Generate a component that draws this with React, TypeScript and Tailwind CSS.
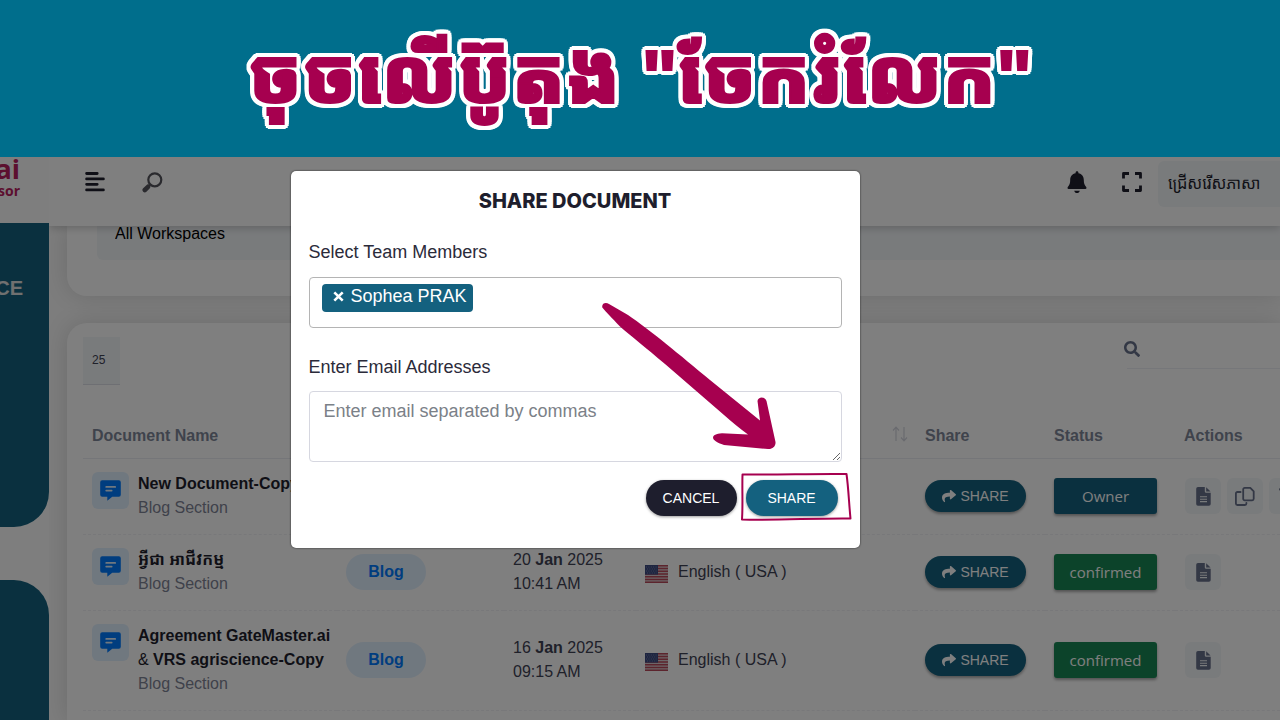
import React from "react";
import { FaSearch, FaShare, FaTrashAlt } from "react-icons/fa";

type Row = {
  title: React.ReactNode;
  kind?: string;
  date?: [string, string, string];
  time?: string;
  language?: string;
  status: string;
  owner?: boolean;
  height: string;
};

const rows: Row[] = [
  { title: "New Document-Copy", status: "Owner", owner: true, height: "h-[76px]" },
  {
    title: "អ្វីជា អាជីវកម្ម",
    kind: "Blog",
    date: ["20", "Jan", "2025"],
    time: "10:41 AM",
    language: "English ( USA )",
    status: "confirmed",
    height: "h-[76px]",
  },
  {
    title: (
      <>
        Agreement GateMaster.ai
        <br />
        <span className="font-normal">&amp;</span> VRS agriscience-Copy
      </>
    ),
    kind: "Blog",
    date: ["16", "Jan", "2025"],
    time: "09:15 AM",
    language: "English ( USA )",
    status: "confirmed",
    height: "h-[100px]",
  },
];

function MenuIcon() {
  return (
    <svg width="20" height="20" viewBox="0 0 20 20" fill="none" stroke="#1e1e2d" strokeWidth="2.8" strokeLinecap="round">
      <path d="M1.6 1.5h10.6M1.6 6.900h16.800M1.6 12.300h10.6M1.6 17.900h16.800" />
    </svg>
  );
}

function LoupeIcon() {
  return (
    <svg width="21" height="21" viewBox="0 0 21 21" fill="none" stroke="#55555c">
      <circle cx="12.8" cy="7.8" r="6.5" strokeWidth="2.2" />
      <path d="M8 12.8 6.4 14.4" strokeWidth="2.4" />
      <path d="M6 14.8 2.8 18" strokeWidth="4.6" strokeLinecap="round" />
    </svg>
  );
}

function BellIcon() {
  return (
    <svg width="20" height="23" viewBox="0 0 20 23" fill="#1e1e2d">
      <path d="M10 .3c.9 0 1.400.6 1.400 1.400v.5c3.400.7 5.400 3.300 5.400 6.700 0 3.400.7 4.900 2.400 7.100.6.8.4 2-.8 2H1.600c-1.200 0-1.400-1.200-.8-2C2.500 13.800 3.200 12.300 3.200 8.900c0-3.400 2-6 5.400-6.700v-.5C8.600.9 9.100.3 10 .3z" />
      <path d="M7.200 19.800h5.600c-.4 1.500-1.400 2.300-2.800 2.300s-2.400-.8-2.800-2.300z" />
    </svg>
  );
}

function FullscreenIcon() {
  return (
    <svg width="20" height="20" viewBox="0 0 20 20" fill="none" stroke="#1e1e2d" strokeWidth="2.8" strokeLinejoin="round">
      <path d="M1.5 6.6V1.5H7M13 1.5h5.500v5.100M18.500 13.400v5.100H13M7 18.500H1.500v-5.100" />
    </svg>
  );
}

function ChatIcon() {
  return (
    <svg width="21" height="21" viewBox="0 0 21 21">
      <path
        d="M2.2.3h16.6a2 2 0 0 1 2 2v12.400a2 2 0 0 1-2 2h-6.600L7.300 20.700v-4H2.200a2 2 0 0 1-2-2V2.300a2 2 0 0 1 2-2z"
        fill="#007bff"
      />
      <path d="M6.200 6.900h9M6.200 10.600h5.500" stroke="#e1f0ff" strokeWidth="1.700" strokeLinecap="round" />
    </svg>
  );
}

function FileIcon() {
  return (
    <svg width="15" height="19" viewBox="0 0 15 19" className="mt-px">
      <path
        d="M2 0h6.800v4.400a1.400 1.400 0 0 0 1.400 1.400h4.500V17a1.800 1.800 0 0 1-1.800 1.800H2A1.800 1.800 0 0 1 .2 17V1.800A1.800 1.800 0 0 1 2 0z"
        fill="#66708a"
      />
      <path d="M10.200.200 14.500 4.500h-4.300z" fill="#66708a" />
      <path d="M4 9.800h7M4 12.200h7M4 14.600h7" stroke="#f3f6f9" strokeWidth="1.100" />
    </svg>
  );
}

function CopyIcon() {
  return (
    <svg width="20" height="19" viewBox="0 0 20 19" fill="none" stroke="#66708a" strokeWidth="1.800" strokeLinejoin="round">
      <path d="M9.700.900h5.600l3.400 3.400v7.500a1.500 1.500 0 0 1-1.500 1.500H9.700a1.500 1.500 0 0 1-1.500-1.500V2.400A1.500 1.500 0 0 1 9.700.900z" />
      <path d="M5.600 5H2.400A1.500 1.500 0 0 0 .900 6.500v10A1.500 1.500 0 0 0 2.400 18h7.500a1.500 1.500 0 0 0 1.500-1.500v-.700" strokeLinecap="round" />
    </svg>
  );
}

function FlagIcon() {
  return (
    <svg width="23" height="18" viewBox="0 0 23 18" className="mt-1" aria-hidden="true">
      <rect width="23" height="18" fill="#d8ccd0" />
      <path
        d="M0 .7h23M0 3.450h23M0 6.200h23M0 8.950h23M0 11.700h23M0 14.450h23M0 17.200h23"
        stroke="#b8485a"
        strokeWidth="1.400"
      />
      <rect width="13" height="9.600" fill="#3c4a80" />
      <path
        d="M1 2h11M2 4h10M1 6h11M2 8h10"
        stroke="#8890b8"
        strokeWidth=".8"
        strokeDasharray="1 1.400"
      />
    </svg>
  );
}

function SortIcon() {
  return (
    <svg width="16" height="16" viewBox="0 0 16 16" fill="none" stroke="#d3d5de" strokeWidth="1.200">
      <path d="M4 15V1.500M1 4.500l3-3.300 3 3.300M12 1v13.500M9 11.500l3 3.300 3-3.300" />
    </svg>
  );
}

function IconButton({ label, children }: { label: string; children: React.ReactNode }) {
  return (
    <button
      type="button"
      aria-label={label}
      className="flex size-9 shrink-0 items-center justify-center rounded-md bg-[#f3f6f9] text-lg text-[#66708a]"
    >
      {children}
    </button>
  );
}

function DocumentRow({ row }: { row: Row }) {
  return (
    <tr className={`${row.height} border-b border-dashed border-[#f0f1f5]`}>
      <td className="pl-[9px]">
        <div className="flex items-start gap-[9px]">
          <span className="flex size-[37px] shrink-0 items-center justify-center rounded-md bg-[#e1f0ff]">
            <ChatIcon />
          </span>
          <div className="leading-6 whitespace-nowrap">
            <div className="font-bold text-[#1e1e2d]">{row.title}</div>
            <div className="text-[#7e8496]">Blog Section</div>
          </div>
        </div>
      </td>
      <td className="pl-[9px]">
        {row.kind && (
          <span className="inline-flex h-9 w-20 items-center justify-center rounded-full bg-[#e1f0ff] font-bold text-[#007bff]">
            {row.kind}
          </span>
        )}
      </td>
      <td className="pl-[9px] leading-6">
        {row.date && (
          <>
            <div>
              {row.date[0]} <b>{row.date[1]}</b> {row.date[2]}
            </div>
            <div>{row.time}</div>
          </>
        )}
      </td>
      <td className="pl-[9px]">
        {row.language && (
          <div className="flex items-center gap-[10px]">
            <FlagIcon />
            <span>{row.language}</span>
          </div>
        )}
      </td>
      <td className="pl-[10px]">
        <button
          type="button"
          className="flex h-8 w-[101px] items-center justify-center gap-1 rounded-full bg-[#14617f] text-sm text-white shadow-[0_2px_3px_rgba(0,0,0,0.35)]"
        >
          <FaShare className="size-[14px]" />
          SHARE
        </button>
      </td>
      <td className="pl-[9px]">
        <button
          type="button"
          className={`flex h-9 w-[103px] items-center justify-center rounded-[3px] font-['Open_Sans','Noto_Sans',sans-serif] text-[15px] text-white shadow-[0_2px_3px_rgba(0,0,0,0.35)] ${
            row.owner ? "bg-[#14617f]" : "bg-[#198754]"
          }`}
        >
          {row.status}
        </button>
      </td>
      <td className="pl-[10px]">
        <div className="flex gap-[6px]">
          <IconButton label="Open">
            <FileIcon />
          </IconButton>
          {row.owner && (
            <>
              <IconButton label="Duplicate">
                <CopyIcon />
              </IconButton>
              <IconButton label="Delete">
                <FaTrashAlt />
              </IconButton>
            </>
          )}
        </div>
      </td>
    </tr>
  );
}

function Workspace() {
  return (
    <div className="flex h-full bg-[#fafafa] text-base text-[#3f4254]">
      <aside className="z-10 flex w-[49px] shrink-0 flex-col bg-[#fdfdfd]">
        <div className="flex h-[66px] flex-col items-end overflow-hidden pr-[29px] font-['Open_Sans',sans-serif] font-bold text-[#b8205f]">
          <span className="-mt-1 text-[27px] leading-8">ai</span>
          <span className="text-sm leading-3">sor</span>
        </div>
        <div className="flex h-[304px] shrink-0 justify-end overflow-hidden rounded-br-[35px] bg-[#14617f] pt-[53px] pr-[26px] text-xl leading-6 font-bold text-[#e0e0e0]">
          CE
        </div>
        <div className="mt-[53px] flex-1 rounded-tr-[35px] bg-[#14617f]" />
      </aside>

      <div className="flex min-w-0 flex-1 flex-col">
        <header className="z-[5] flex h-[69px] shrink-0 items-center bg-white pt-1 pb-[19px] pl-9 shadow-[0_2px_8px_rgba(0,0,0,0.2)]">
          <button type="button" aria-label="Menu" className="pb-1">
            <MenuIcon />
          </button>
          <button type="button" aria-label="Search" className="ml-[37px] pb-1">
            <LoupeIcon />
          </button>
          <button type="button" aria-label="Notifications" className="ml-auto pb-1">
            <BellIcon />
          </button>
          <button type="button" aria-label="Full screen" className="ml-[35px] pb-1">
            <FullscreenIcon />
          </button>
          <select
            aria-label="Language"
            className="ml-4 h-[46px] w-[122px] appearance-none rounded-l-md bg-[#f3f6f9] pl-[10px] text-base text-[#1e1e2d]"
          >
            <option>ជ្រើសរើសភាសា</option>
          </select>
        </header>

        <main className="flex min-h-0 flex-1 flex-col gap-[27px] pl-[18px]">
          <section className="h-[70px] shrink-0 rounded-bl-[20px] bg-white pl-[30px] shadow-[0_0_24px_rgba(0,0,0,0.14)]">
            <div className="flex h-[34px] items-end overflow-hidden rounded-bl-md">
              <select
                aria-label="Workspace"
                className="h-[52px] w-full shrink-0 appearance-none bg-[#f3f6f9] pl-[18px] text-base text-black"
              >
                <option>All Workspaces</option>
              </select>
            </div>
          </section>

          <section className="flex-1 rounded-tl-[20px] bg-white pt-[14px] pl-4 shadow-[0_0_24px_rgba(0,0,0,0.14)]">
            <div className="mb-[30px] flex h-12 items-start justify-between">
              <select
                aria-label="Rows per page"
                className="h-12 w-[37px] appearance-none border-b border-[#dcdfe6] bg-[#f3f6f9] pb-[2px] pl-[9px] text-xs"
              >
                <option>25</option>
              </select>
              <label className="flex h-8 w-[156px] items-center text-base text-[#66708a]">
                <FaSearch className="mb-2 shrink-0" />
                <input
                  type="search"
                  aria-label="Search documents"
                  className="-ml-[13px] h-8 w-full border-b border-[#eceef4] bg-transparent pl-6"
                />
              </label>
            </div>

            <table className="w-full table-fixed border-collapse text-left">
              <colgroup>
                <col className="w-[254px]" />
                <col className="w-[167px]" />
                <col className="w-[132px]" />
                <col className="w-[279px]" />
                <col className="w-[130px]" />
                <col className="w-[130px]" />
                <col />
              </colgroup>
              <thead>
                <tr className="h-[43px] border-b border-[#ebedf3] text-[#7e8799]">
                  <th className="pl-[9px] font-bold">Document Name</th>
                  <th />
                  <th />
                  <th>
                    <span className="flex justify-end pr-[7px] pb-1">
                      <SortIcon />
                    </span>
                  </th>
                  <th className="pl-[10px] font-bold">Share</th>
                  <th className="pl-[9px] font-bold">Status</th>
                  <th className="pl-[9px] font-bold">Actions</th>
                </tr>
              </thead>
              <tbody>
                {rows.map((row, index) => (
                  <DocumentRow key={index} row={row} />
                ))}
              </tbody>
            </table>
          </section>
        </main>
      </div>
    </div>
  );
}

function ShareDialog() {
  return (
    <div
      role="dialog"
      aria-labelledby="share-title"
      className="relative w-[569px] rounded-[5px] bg-white px-[18px] pt-[18px] pb-8 text-lg text-[#2b2b3a] shadow-[0_0_2px_rgba(0,0,0,0.8)]"
    >
      <h2
        id="share-title"
        className="text-center font-['Inter','Liberation_Sans',sans-serif] text-xl leading-6 font-extrabold text-[#1e1e2d]"
      >
        SHARE DOCUMENT
      </h2>

      <label htmlFor="members" className="mt-[27px] block leading-6">
        Select Team Members
      </label>
      <div className="mt-[13px] flex h-[51px] items-start rounded border border-[#b4b4b4] pt-[6px] pl-3">
        <span className="flex h-7 shrink-0 items-center gap-[7px] rounded bg-[#14617f] pr-[6px] pb-1 pl-[11px] text-white">
          <button type="button" aria-label="Remove Sophea PRAK">
            <svg width="11" height="11" viewBox="0 0 11 11" stroke="white" strokeWidth="2.600">
              <path d="M1.300 1.300 9.700 9.700M9.700 1.300 1.300 9.700" />
            </svg>
          </button>
          Sophea PRAK
        </span>
        <input id="members" className="min-w-0 flex-1 bg-transparent outline-none" />
      </div>

      <label htmlFor="emails" className="mt-[27px] block leading-6">
        Enter Email Addresses
      </label>
      <textarea
        id="emails"
        placeholder="Enter email separated by commas"
        className="mt-3 block h-[71px] w-full rounded border border-[#d6d7e0] px-[14px] py-[7px] leading-6 placeholder:text-[#7b8188]"
      />

      <div className="mt-[18px] flex justify-end gap-[9px] pr-1 text-sm text-white">
        <button type="button" className="h-9 w-[91px] rounded-full bg-[#1e1e2d] shadow-[0_1px_3px_rgba(0,0,0,0.4)]">
          CANCEL
        </button>
        <button type="button" className="h-9 w-[92px] rounded-full bg-[#14617f] shadow-[0_1px_3px_rgba(0,0,0,0.4)]">
          SHARE
        </button>
      </div>

      {/* Hand-drawn arrow and frame that point out the SHARE button */}
      <svg
        className="pointer-events-none absolute top-[129px] left-[299px]"
        width="290"
        height="230"
        viewBox="0 20 290 230"
        aria-hidden="true"
      >
        <path
          d="M12.300 27.500C11.500 23 16 22 19 24L38 35C60 50 90 75 120 100L170 140.500L167.500 121C168 116.500 175 116 176.500 121L185.500 162C186 166.500 182 169.500 178 169L134 165C120 161 119.500 154 132 153.300L158 154.500C150 149 142 142 134 135L75 84C55 67 41 56 30 46.500C22 38 16 32 12.300 27.500Z"
          fill="#a6004f"
        />
        <path
          d="M152.500 194.500C188 195 222 193.500 256.500 194C258.500 208 259 224 260.500 238.500C225 238 188 240.500 152 239.500C153 225 152 209 152.500 194.500Z"
          fill="none"
          stroke="#a6004f"
          strokeWidth="2"
          strokeLinejoin="round"
        />
      </svg>
    </div>
  );
}

export default function App() {
  return (
    <div className="flex h-screen flex-col overflow-hidden font-['Liberation_Sans','Noto_Sans_Khmer','Khmer_OS',sans-serif]">
      <div className="flex h-[157px] shrink-0 items-center justify-center bg-[#006e8c] pb-1">
        <h1 className="text-[76px] leading-none font-black whitespace-nowrap text-[#a6004f] [-webkit-text-stroke:2px_#a6004f] [text-shadow:5px_0_white,-5px_0_white,0_5px_white,0_-5px_white,4px_4px_white,-4px_4px_white,4px_-4px_white,-4px_-4px_white,5px_2px_white,-5px_2px_white,5px_-2px_white,-5px_-2px_white,2px_5px_white,-2px_5px_white,2px_-5px_white,-2px_-5px_white]">
          ចុចលើប៊ូតុង "ចែករំលែក"
        </h1>
      </div>
      <div className="relative min-h-0 flex-1 overflow-hidden">
        <Workspace />
        <div className="absolute inset-0 z-20 flex items-start justify-center bg-black/50 pt-[14px] pr-[130px]">
          <ShareDialog />
        </div>
      </div>
    </div>
  );
}
